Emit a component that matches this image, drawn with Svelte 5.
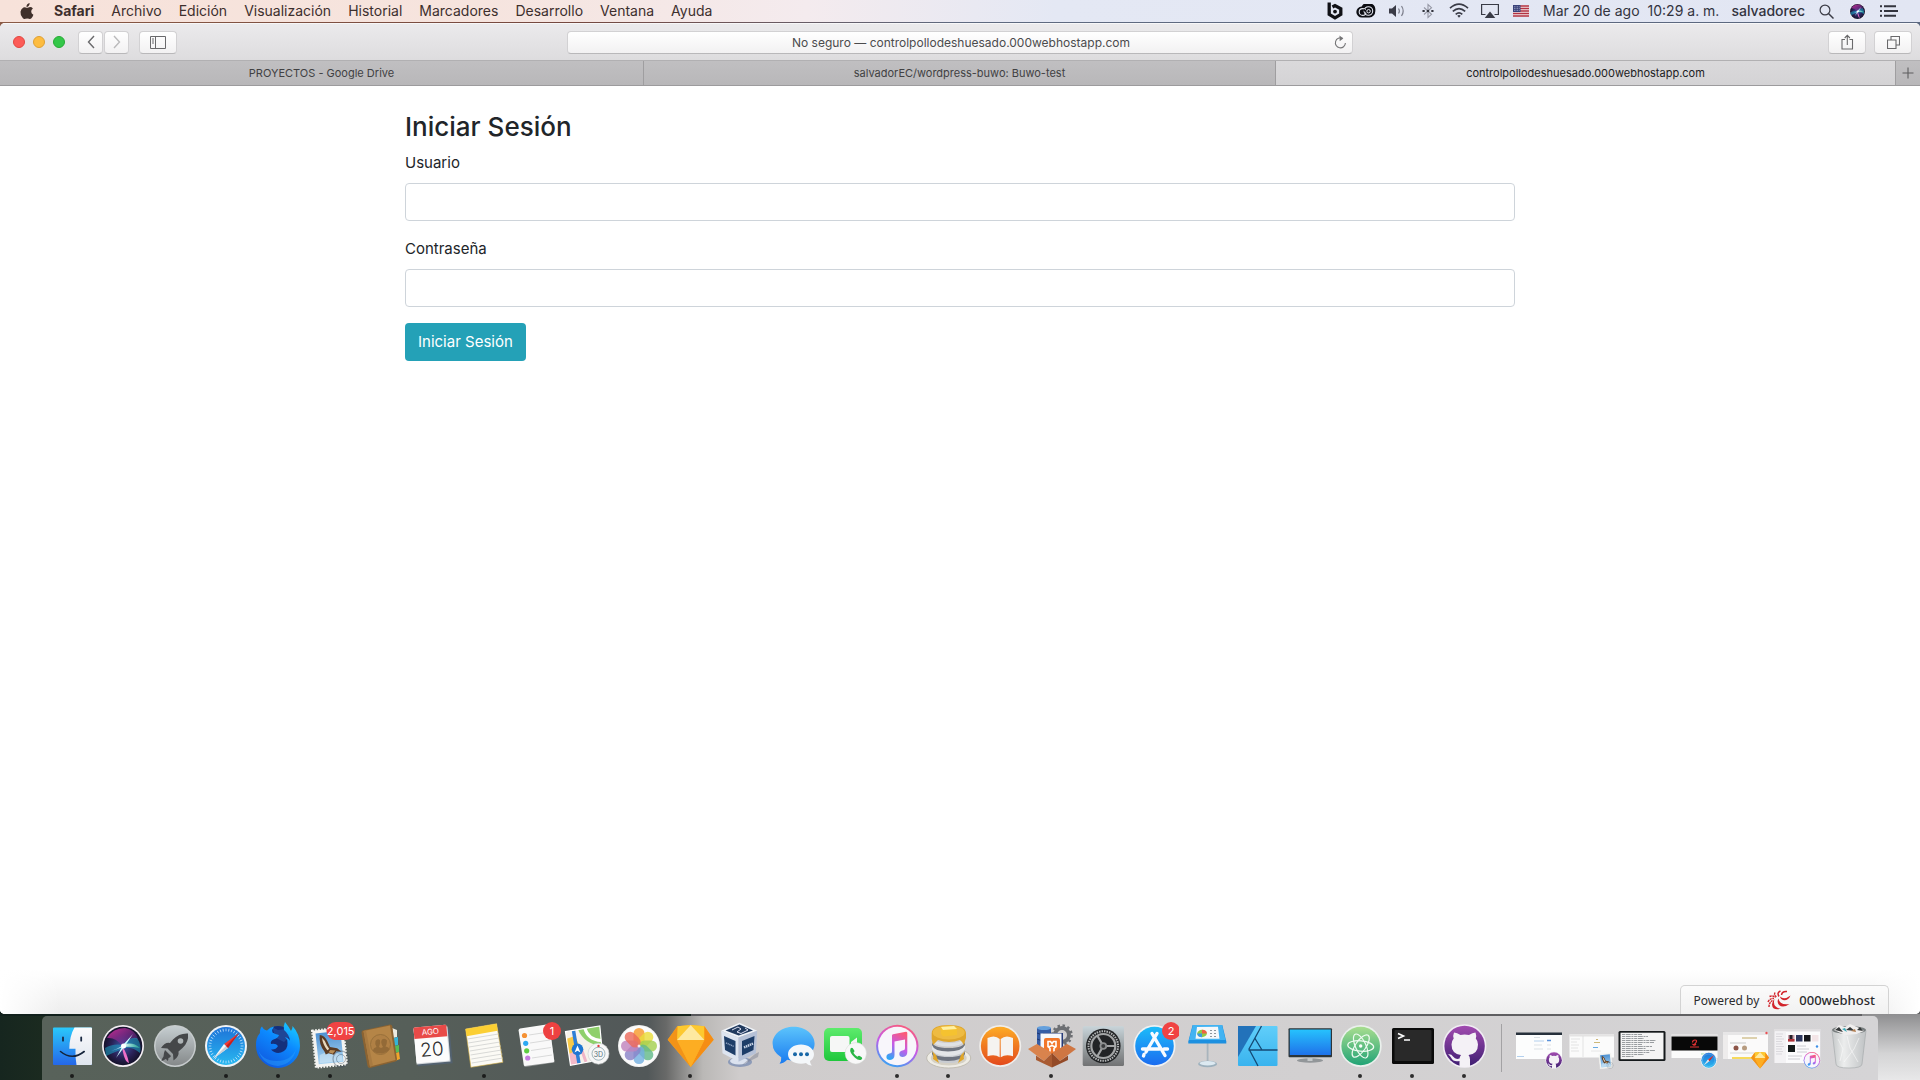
<script>
  let user = $state('');
  let password = $state('');
  const menus = ['Archivo', 'Edición', 'Visualización', 'Historial', 'Marcadores', 'Desarrollo', 'Ventana', 'Ayuda'];
  const ticks = Array.from({ length: 36 }, (_, i) => i * 10);
  const petals = [
    ['#f79a2d', 0], ['#e9dd3c', 45], ['#a5cf4f', 90], ['#63b98a', 135],
    ['#74b0e0', 180], ['#8a84c8', 225], ['#c084bd', 270], ['#ec6a5c', 315]
  ];
</script>

{#snippet finder()}
  <defs>
    <linearGradient id="fnA" x1="0" y1="0" x2="0" y2="1"><stop offset="0" stop-color="#2ac8fb" /><stop offset="1" stop-color="#2567e8" /></linearGradient>
    <linearGradient id="fnB" x1="0" y1="0" x2="0" y2="1"><stop offset="0" stop-color="#fafafc" /><stop offset="1" stop-color="#dfe5ee" /></linearGradient>
  </defs>
  <rect x="6" y="6.5" width="39" height="37.5" rx="1" fill="url(#fnA)" />
  <path d="M27.5 6.5H44a1 1 0 0 1 1 1V43a1 1 0 0 1-1 1H29.5q-1.400-7-1-16.300H22.300Q22.500 15 27.500 6.500Z" fill="url(#fnB)" />
  <path d="M16 16.300v3.400M34.200 16.300v3.400" stroke="#1c2b44" stroke-width="1.800" stroke-linecap="round" />
  <path d="M13.500 30.500q11.800 9.500 23.700 0" fill="none" stroke="#14233a" stroke-width="1.600" stroke-linecap="round" />
{/snippet}

{#snippet siri()}
  <defs>
    <radialGradient id="srA"><stop offset="0" stop-color="#3b57a8" /><stop offset=".6" stop-color="#2a2258" /><stop offset="1" stop-color="#15122b" /></radialGradient>
    <linearGradient id="srB" x1="0" y1="0" x2="1" y2="1"><stop offset="0" stop-color="#d6309b" /><stop offset="1" stop-color="#4b2585" stop-opacity=".3" /></linearGradient>
    <linearGradient id="srC" x1="0" y1="0" x2="1" y2="0"><stop offset="0" stop-color="#17a5e8" stop-opacity=".4" /><stop offset=".5" stop-color="#fff" /><stop offset="1" stop-color="#2fd8a0" stop-opacity=".5" /></linearGradient>
  </defs>
  <circle cx="25" cy="25" r="21" fill="#f3eef3" />
  <circle cx="25" cy="25" r="19.300" fill="url(#srA)" />
  <path d="M9 17Q15 7 27 7q11 2 13 12-7-5-16 6Q18 16 9 17Z" fill="url(#srB)" />
  <path d="M7 27q8-5 18-3 7-9 14-7 5 7 3 15-7-6-15-5-10 4-19 8Z" fill="#1ca6c8" opacity=".55" />
  <path d="M8 31q11-2 17-7 9-4 17 3-10-2-17-1-7 3-17 5Z" fill="url(#srC)" />
  <path d="M24 25q5 7 7 17-5-1-7-17Z" fill="#f070c9" />
  <path d="m25 24 10-11-8 12-9 12Z" fill="#cffcff" />
  <circle cx="25.500" cy="25" r="2.500" fill="#fff" />
{/snippet}

{#snippet launchpad()}
  <defs><linearGradient id="lpA" x1="0" y1="0" x2="0" y2="1"><stop offset="0" stop-color="#c5cdd0" /><stop offset="1" stop-color="#85898a" /></linearGradient></defs>
  <circle cx="25" cy="25" r="21" fill="#c7cccd" /><circle cx="25" cy="25" r="19.500" fill="url(#lpA)" />
  <path d="M38 12.500q-9-.5-15 6l-3 3.500q-5-1-9 5l6.500.5 5.500 5.500.5 6.500q6-4 5-9l4-3.500q6.500-6 5.500-14.500Z" fill="#454749" />
  <path d="m15 29 6 6q-1 2-2.500 2 0 2-1 3-1-2-2-2-1.500 1.500-4 2 .5-3 2-4.500 0-3 1.500-6.500Z" fill="#454749" />
  <circle cx="30.500" cy="20" r="2.800" fill="#aeb4b6" />
{/snippet}

{#snippet safari()}
  <defs><linearGradient id="sfA" x1="0" y1="0" x2="0" y2="1"><stop offset="0" stop-color="#1e73d8" /><stop offset="1" stop-color="#28b8f0" /></linearGradient></defs>
  <circle cx="25" cy="25" r="21" fill="#f1f3f5" /><circle cx="25" cy="25" r="19" fill="url(#sfA)" />
  {#each ticks as t (t)}<path d="M25 7.500v2.800" stroke="#d5edff" stroke-width=".7" transform="rotate({t} 25 25)" />{/each}
  <path d="m38 12-11 15-4-4Z" fill="#ef3b36" /><path d="m12 38 11-15 4 4Z" fill="#f7f7f7" /><path d="m12 38 13-13 2 2Z" fill="#c9ced6" /><path d="M38 12 25 25l2 2Z" fill="#c4201f" />
{/snippet}

{#snippet firefox()}
  <defs>
    <linearGradient id="ffA" x1=".9" y1="0" x2=".3" y2="1"><stop offset="0" stop-color="#1bd2ff" /><stop offset=".45" stop-color="#0c8aff" /><stop offset="1" stop-color="#1059e0" /></linearGradient>
  </defs>
  <circle cx="25" cy="20" r="15" fill="#142f7c" />
  <path d="m19 6 6 3 8-1 4 7-6 6-8-4Z" fill="#24509f" opacity=".7" />
  <path d="M9 5.500Q10.500 9 14 9.500 17 6 21 5.500 18.500 8.500 19.500 11.500 22 13 26 14 25 17 20.500 18.500 17 20 18 23 23 22 25 25 23 29 18 28.500 22 33 28 31.500 35 29 34.500 22 34.500 18 32 16 36 17 37 20 36 13 31 9 30 5 32 1 36 6 38 10 40 7 39.500 5 47 13 47 25A22 22 0 0 1 3 25Q2.500 17 7 12 6.500 8 9 5.500Z" fill="url(#ffA)" />
  <path d="M5 28q4 12 19 12 14 0 19-12-3 15-18 17Q9 44 5 28Z" fill="#2ea7ff" opacity=".4" />
{/snippet}

{#snippet mailStamp()}
  <defs><linearGradient id="mlA" x1="0" y1="0" x2="0" y2="1"><stop offset="0" stop-color="#4e91d2" /><stop offset="1" stop-color="#a9d4f2" /></linearGradient></defs>
  <g transform="rotate(-6 25 26)">
    <rect x="9" y="8" width="31" height="37" fill="#f4f4f1" />
    <rect x="9" y="8" width="31" height="37" fill="none" stroke="#f4f4f1" stroke-width="2.400" stroke-dasharray="1.600 1.400" />
    <rect x="12" y="11" width="25" height="31" fill="url(#mlA)" />
    <path d="M14 33q10-5 22 2v6H13Z" fill="#dcecf6" opacity=".5" />
    <path d="M16 13q5 1 7 7l2 6 7 2 4 4-5-1-3 3-5-2-3 1-1-3q-5-8-3-17Z" fill="#5a3b24" />
    <path d="M18 16q3 3 4 8l2 4-2 1q-4-6-4-13Z" fill="#e8d9be" /><path d="m25 29 5 1-3 3-4-2Z" fill="#b98e58" />
  </g>
  <circle cx="36" cy="38" r="8" fill="none" stroke="#3c4c5c" stroke-opacity=".4" stroke-width="1.300" />
  <circle cx="36" cy="38" r="4.500" fill="none" stroke="#3c4c5c" stroke-opacity=".4" stroke-width="1" />
{/snippet}

{#snippet mail()}
  {@render mailStamp()}
  <rect x="21.500" y="1" width="28.500" height="18" rx="9" fill="#f04343" />
  <text x="35.700" y="14" class="badge">2,015</text>
{/snippet}

{#snippet contacts()}
  <path d="m36 7 5 2v7l-4 1Z" fill="#eceae0" /><path d="m38 17 4-1v8l-4 1Z" fill="#36b4d8" /><path d="m39 25 4-1v7l-4 1Z" fill="#57bd55" /><path d="m40 32 3-1 1 7-5 2Z" fill="#f0a52c" />
  <path d="M6.500 9.500 34 3.500q2 0 2.300 2L41 38q0 2-1.500 2.500L14 47q-2 0-2.500-2L5.500 12q0-2 1-2.500Z" fill="#8b6332" />
  <path d="M7.500 10 34 4.500 39.500 39 14 45.500Z" fill="#b58547" />
  <path d="m7.500 10 2.500-.5L17 45l-3 .5Z" fill="#a87a41" />
  <circle cx="24.500" cy="23.500" r="10" fill="#b08045" stroke="#98703a" stroke-width="1" />
  <path d="M17 30q0-3 3.500-4-2-3-1-6 2-3 4.500-1 1 3-1 7l2 1 2-1q-3-5-1-7.500 3-2 5 1 0 4-1.500 6 3.500.5 4 3-4 4-8.500 4-5 0-8-2.500Z" fill="#936a37" />
{/snippet}

{#snippet calendar()}
  <g transform="rotate(-5 24 24)">
    <path d="M8 9h35v35H8Z" fill="#536270" /><path d="M7 7h34v35H7Z" fill="#d4d8dc" />
    <rect x="7" y="5" width="33" height="36" rx="1.500" fill="#fcfcfc" />
    <path d="M8 5h31a1 1 0 0 1 1 1v10.500H7V6a1 1 0 0 1 1-1Z" fill="#e84a48" />
    <text x="23.500" y="13.500" class="month">AGO</text>
    <text x="23.500" y="35" class="day">20</text>
  </g>
{/snippet}

{#snippet notes()}
  <path d="m6.600 8 31-5.300 6.300 38.600-32 5Z" fill="#fbfaf5" stroke="#d9b243" stroke-width=".6" />
  <path d="m6.600 8 31-5.300 1 7-31 5.500Z" fill="#fbcf33" />
  <path d="m8.500 18 31-5m-30.300 9 31-5m-30.200 9 31-5m-30.200 9 31-5m-30.200 9 31-5m-30.200 9 31-5m-30.600 9 31-5" stroke="#c9cac8" stroke-width=".7" />
{/snippet}

{#snippet reminders()}
  <path d="m9.500 8.500 29-4 5 37-29 4.500q-1 0-1.500-1Z" fill="#8e9292" />
  <path d="M9 7.500 37 3.300q1.300 0 1.500 1.300L43.300 40q0 1-1 1.300L14 45q-1 0-1.200-1L7.600 9.500q0-1.500 1.400-2Z" fill="#f9f9f9" />
  <path d="m18 14 20-3m-19 11 20-3m-19 10.500 20-3M21 37l20-3" stroke="#d0d2d2" stroke-width=".8" />
  <circle cx="13.500" cy="14.500" r="2.600" fill="#f59134" /><circle cx="14.700" cy="22.300" r="2.600" fill="#2da9f3" /><circle cx="15.700" cy="29.800" r="2.600" fill="#5ecc43" /><circle cx="16.700" cy="37" r="2.600" fill="#c47ae0" />
  <circle cx="41" cy="10" r="9" fill="#ee4141" /><text x="41" y="14" class="badge">1</text>
{/snippet}

{#snippet maps()}
  <path d="m3.500 10.700 34.300-5.700L41 38.300 8.500 44.300Z" fill="#f6f2ea" />
  <path d="m16 8.600 21.800-3.600 2 20Q22 23 16 8.600Z" fill="#8fd06c" /><path d="M23 7.500q3 11 16 12" fill="none" stroke="#fff" stroke-width="3" />
  <path d="m4 18 9-3 4 9-9 12Z" fill="#f7c948" /><path d="m7 33 6-3 4 12.500-8.500 1.800Z" fill="#f3b9c9" /><path d="m19 27 5 14" stroke="#f0b5c7" stroke-width="3" />
  <path d="m11.500 9.500 5.500 33" stroke="#2d7fd6" stroke-width="3.500" />
  <path d="m3.500 10.700 34.300-5.700L41 38.300 8.500 44.300Z" fill="none" stroke="#fff" stroke-width="1.200" />
  <circle cx="15.500" cy="28.300" r="5.800" fill="#1f76d2" /><path d="m15.500 24.500 3 7-3-1.800-3 1.800Z" fill="#fff" />
  <circle cx="36.500" cy="32.700" r="10.500" fill="#f7f7f7" stroke="#c8cccd" stroke-width=".6" /><circle cx="36.500" cy="32.700" r="6.500" fill="none" stroke="#8ba5ab" stroke-width=".8" />
  <text x="36.500" y="35.500" class="three">3D</text><circle cx="36.500" cy="25" r="1.200" fill="#e2373a" />
{/snippet}

{#snippet photos()}
  <circle cx="25" cy="25" r="21" fill="#f1f1f1" /><circle cx="25" cy="25" r="20" fill="#fbfbfb" />
  {#each petals as [color, angle] (angle)}<rect x="19.500" y="7" width="11" height="18" rx="5.500" fill={color} opacity=".82" transform="rotate({angle} 25 25)" />{/each}
  <circle cx="25" cy="25" r="1.500" fill="#fff" opacity=".8" />
{/snippet}

{#snippet sketch()}
  <path d="M2.700 18.700 12.400 5.300 25.700 4l13.700 1.300 9.300 13.400L25.700 46Z" fill="#fbab1c" />
  <path d="M12.400 5.300 25.700 4 12 19.300Z" fill="#fdc92f" /><path d="m39.400 5.300-13.700-1.300 13.700 15.300Z" fill="#fdc92f" />
  <path d="M25.700 4 12 19h27.400Z" fill="#fee9a0" /><path d="m2.700 18.700 9.700-13.400-.4 13.700 13.700 27Z" fill="#f29318" /><path d="m48.700 18.700-9.300-13.400v13.700L25.700 46Z" fill="#f58d14" /><path d="M12 19h27.400L25.700 46Z" fill="#fdad22" />
{/snippet}

{#snippet vbox()}
  <ellipse cx="23" cy="41" rx="12" ry="5" fill="#8d9bb8" /><ellipse cx="22" cy="40" rx="9" ry="3.500" fill="#dbe2ef" />
  <path d="m38 33 4-2-1 5-16 8Z" fill="#7f8494" opacity=".5" />
  <path d="M22.500 1.700 4.200 9.700 21.500 16.500l18.700-6.800Z" fill="#f0f3f8" /><path d="m4.200 9.700 17.300 6.800v24.200l-16-8.400Z" fill="#dde4f0" /><path d="m40.200 9.700-18.700 6.800v24.200l17.400-8.400Z" fill="#b6c1d7" />
  <path d="M22.500 3.500 8.500 9.600l13.200 5 14.300-5Z" fill="#213a5e" /><path d="m15 9 6-3 3 2-4 3 4 1.500 7-3.500-3-2" fill="none" stroke="#eef" stroke-width=".9" />
  <path d="m7 15 11.500 5v14.500L8 29Z" fill="#1d3d68" /><path d="m37.500 15-12.500 5v14.500L36.500 29Z" fill="#1d3d68" />
  <path d="m9 22 8 3.500" stroke="#8ea2c2" stroke-width="1.400" stroke-dasharray="1.200 .6" /><path d="m27 26.500 9-4" stroke="#cbd6e8" stroke-width="2.400" stroke-dasharray="1.500 .6" />
{/snippet}

{#snippet messages()}
  <defs><linearGradient id="msA" x1="0" y1="0" x2="0" y2="1"><stop offset="0" stop-color="#5cc4fc" /><stop offset="1" stop-color="#1a7bf0" /></linearGradient></defs>
  <path d="M25.600 5.700C37 5.700 46.600 13 46.600 22.500S37 39.500 25.600 39.500q-4 0-6.500-.8-3 3.500-7.500 4 2-2.500 1.600-6.500-8.600-5-8.600-13.700C4.600 13 14 5.700 25.600 5.700Z" fill="url(#msA)" />
  <path d="M33 23.500c7 0 13 4 13 9.800 0 3-1.500 5.200-4 6.800.2 2 1 3.500 2 4.500-3-.2-5-1.300-6-2.500q-2 .7-5 .7c-7 0-13-3.800-13-9.500s6-9.800 13-9.800Z" fill="#f4f7fa" />
  <circle cx="27" cy="33.300" r="2" fill="#1867a7" /><circle cx="33" cy="33.300" r="2" fill="#1867a7" /><circle cx="39" cy="33.300" r="2" fill="#1867a7" />
{/snippet}

{#snippet facetime()}
  <defs><linearGradient id="ftA" x1="0" y1="0" x2="0" y2="1"><stop offset="0" stop-color="#5deb6c" /><stop offset="1" stop-color="#1fc73c" /></linearGradient></defs>
  <rect x="4" y="7" width="38" height="33" rx="5" fill="url(#ftA)" /><rect x="10" y="15" width="19.500" height="16" rx="2" fill="#f6f7f6" /><path d="m31 21 6-4.500v14L31 26Z" fill="#f6f7f6" />
  <circle cx="35.800" cy="32.300" r="10.700" fill="#f8f8f8" stroke="#d3d6d3" stroke-width=".5" />
  <path d="M30.500 27.500q1.500-1.500 2.300-.3l1.600 2.500q.3 1-1 2 1.500 2.500 4 4 1.300-1.500 2.300-.8l2 1.400q1.200.8-.2 2.200-2.500 1.700-6.500-1.700-6-5.500-4.500-9.300Z" fill="#29b645" />
{/snippet}

{#snippet itunes()}
  <defs>
    <linearGradient id="itA" x1=".7" y1="0" x2=".3" y2="1"><stop offset="0" stop-color="#fb5b78" /><stop offset=".5" stop-color="#c65be8" /><stop offset="1" stop-color="#32a5f4" /></linearGradient>
  </defs>
  <circle cx="25.300" cy="25" r="21.200" fill="url(#itA)" /><circle cx="25.300" cy="25" r="19.200" fill="#f8f6fb" />
  <path fill-rule="evenodd" d="M20 14.500q0-1 1-1.300l13-2.400q1.300 0 1.300 1.200v19q0 4.500-4.500 5-3.500 0-3.500-3 0-3.300 4-3.800 1.700-.2 1.700-2v-8.700l-10.500 2V34q0 4.500-4.500 5-3.600 0-3.600-3 0-3.300 4-3.800 1.600-.2 1.600-2Z" fill="url(#itA)" />
{/snippet}

{#snippet sequel()}
  <ellipse cx="25.700" cy="37" rx="22" ry="10" fill="#eeece5" stroke="#b9b5a9" stroke-width=".8" /><ellipse cx="25.700" cy="37" rx="18" ry="7.500" fill="#d5d1c6" />
  <path d="M9 34q0 8 16.700 8T42 34v-5H9Z" fill="#c9ccd1" /><path d="M9 29q0 7 16.500 7T42 29v4q-3 7-17 7T9 33Z" fill="#6e7480" />
  <path d="M9 22q0 7 16.500 7T42 22v6q-3 7-17 7T9 28Z" fill="#e3e5e8" /><path d="M9 20q0 7 16.500 7T42 20v4q-3 6.500-17 6.500T9 24Z" fill="#707580" />
  <path d="M9 14q0 8 16.500 8T42 14v5q-3 6.500-17 6.500T9 19Z" fill="#dfe1e4" />
  <path d="M8.700 12Q9 4 25.700 4T43 12v5l-1 3-1 4-2-3-2-2q-11 4-22 0l-3 3-2 2-1.300-6Z" fill="#dfa62c" />
  <path d="M9 30q2 3 1 8l6 4-3-8Zm33 0q-2 3-1 8l-6 4 3-8Z" fill="#e0a62a" />
  <ellipse cx="25.700" cy="11.500" rx="16" ry="7" fill="#eebb42" />
  <path d="m18 6 13-1 3 3v6l-14 1.500-2-3Z" fill="#f5c230" /><path d="m18 6 13-1 3 3-14 1Z" fill="#fff0a2" />
{/snippet}

{#snippet ibooks()}
  <defs><linearGradient id="ibA" x1="0" y1="0" x2="0" y2="1"><stop offset="0" stop-color="#fdab25" /><stop offset="1" stop-color="#e3491c" /></linearGradient></defs>
  <circle cx="25.200" cy="25" r="21" fill="#efeeec" /><circle cx="25.200" cy="25" r="19.300" fill="url(#ibA)" />
  <path d="M12.500 17q7.500-3.500 12.200 1v18.200q-5-3.500-12.200-1Zm25.500 0q-7.500-3.500-12.300 1v18.200q5-3.500 12.300-1Z" fill="#f5f3f0" />
{/snippet}

{#snippet xampp()}
  <circle cx="36" cy="14" r="7" fill="none" stroke="#6d6f73" stroke-width="4" /><circle cx="36" cy="14" r="9.500" fill="none" stroke="#6d6f73" stroke-width="2.500" stroke-dasharray="2.400 2.600" />
  <path d="M11 7v20h14V7Z" fill="#355ca5" /><ellipse cx="18" cy="7" rx="7" ry="2" fill="#64a0dd" /><path d="M11 12q7 3.500 14 0m-14 6q7 3.500 14 0" stroke="#1c3670" fill="none" />
  <path d="M17 12h20v20H17Z" fill="#273b78" /><rect x="14.500" y="12.500" width="21" height="22" fill="#f6f7fb" /><rect x="18" y="17" width="16" height="16" rx="2" fill="#f2762a" />
  <path d="M22 20.500h2.500l1.500 2 1.500-2H30v5h-2l-2-1-2 1h-2Zm0 5 2 2v3m6-5-2 2v3" fill="none" stroke="#fff" stroke-width="1.600" />
  <path d="m2 28 9-5 15 9-8 8Z" fill="#d9834d" /><path d="m50 28-9-5-15 9 8 8Z" fill="#cf7642" /><path d="M10 34.500V39l16 7.500V32l-8 8Z" fill="#a95b32" /><path d="M42 34.500V39l-16 7.500V32l8 8Z" fill="#944a27" />
{/snippet}

{#snippet prefs()}
  <defs><linearGradient id="spA" x1="0" y1="0" x2="0" y2="1"><stop offset="0" stop-color="#c8d4d9" /><stop offset="1" stop-color="#717273" /></linearGradient></defs>
  <rect x="4.700" y="5.300" width="41.300" height="39.700" rx="1.500" fill="url(#spA)" /><circle cx="25.300" cy="25" r="17.300" fill="#222426" />
  <circle cx="25.300" cy="25" r="14.800" fill="none" stroke="#b3b5b6" stroke-width="2" stroke-dasharray="1.500 1" /><circle cx="25.300" cy="25" r="12" fill="none" stroke="#a3a5a6" stroke-width="2.200" />
  <path d="M25.300 25H37M25.300 25 19.500 15m5.800 10L19.500 35" stroke="#a3a5a6" stroke-width="2.200" /><circle cx="25.300" cy="25" r="3.800" fill="#8e9091" /><circle cx="25.300" cy="25" r="2" fill="#3a3c3e" />
{/snippet}

{#snippet appstore()}
  <defs><linearGradient id="asA" x1="0" y1="0" x2="0" y2="1"><stop offset="0" stop-color="#1cbcf9" /><stop offset="1" stop-color="#1b6cf0" /></linearGradient></defs>
  <circle cx="25.500" cy="25" r="21" fill="#eff1f3" /><circle cx="25.500" cy="25" r="19.300" fill="url(#asA)" />
  <path d="m28 12.500-11 18.500m6-18.500 13 22m-22.500-6.500h17m4.500 0h3.500M15 33.500 14.500 35" fill="none" stroke="#f7fbff" stroke-width="3.400" stroke-linecap="round" />
  <circle cx="42" cy="10" r="9" fill="#f04343" /><text x="42" y="14" class="badge">2</text>
{/snippet}

{#snippet keynote()}
  <path d="M26.600 22v20" stroke="#a9b4bd" stroke-width="1.800" /><ellipse cx="26.600" cy="43" rx="9.500" ry="3.200" fill="#9cb0bd" /><ellipse cx="26.600" cy="42.300" rx="8" ry="2.200" fill="#dce9f1" />
  <path d="M11.600 4h29.700l4 16.500v2H7.300v-2Z" fill="#1d90e0" /><path d="M12 4h29l3.500 15H8Z" fill="#42b3f2" />
  <path d="m16 6 21-.2 1.500 12H14.500Z" fill="#f7f8f9" /><ellipse cx="21" cy="12.500" rx="4.800" ry="3.700" fill="#8fca47" /><path d="M21 12.500V8.800q5 0 4.800 3.700Z" fill="#ef6142" /><path d="M21 12.500h-4.800q0 3.700 4.800 3.700Z" fill="#3c9ae2" /><path d="M29 9.500h2m2 0h2m-6 3h2m2 0h2m-6 3h2m2 0h2" stroke="#8e979e" />
{/snippet}

{#snippet affinity()}
  <defs><linearGradient id="afA" x1="0" y1="0" x2="0" y2="1"><stop offset="0" stop-color="#60cefa" /><stop offset="1" stop-color="#39b3ee" /></linearGradient></defs>
  <rect x="6" y="5" width="39.500" height="40" rx="1" fill="url(#afA)" /><path d="M6 5h18L6 36Z" fill="#2272ba" /><path d="M29.500 5 17 28l9 17M16.500 29h29M23 17.500 30 29" fill="none" stroke="#144a75" stroke-width="1.300" />
{/snippet}

{#snippet monitor()}
  <defs><linearGradient id="mnA" x1="0" y1="0" x2="0" y2="1"><stop offset="0" stop-color="#26c2fd" /><stop offset="1" stop-color="#1f72ea" /></linearGradient></defs>
  <ellipse cx="26" cy="39.500" rx="13" ry="2.200" fill="#929699" /><path d="M23.500 35h5v5h-5Z" fill="#c4c8ca" /><rect x="4.500" y="7.300" width="43.500" height="29" rx="1" fill="#2c3439" /><rect x="5.800" y="8.500" width="41" height="25.500" fill="url(#mnA)" />
{/snippet}

{#snippet atom()}
  <defs><linearGradient id="atA" x1="0" y1="0" x2="0" y2="1"><stop offset="0" stop-color="#a8dd8f" /><stop offset="1" stop-color="#21a376" /></linearGradient></defs>
  <circle cx="25.700" cy="25" r="21" fill="#eaf0ec" /><circle cx="25.700" cy="25" r="19.300" fill="url(#atA)" />
  <g fill="none" stroke="#effbf2" stroke-width="1.200"><ellipse cx="25.700" cy="25" rx="13" ry="5.200" transform="rotate(5 25.700 25)" /><ellipse cx="25.700" cy="25" rx="13" ry="5.200" transform="rotate(65 25.700 25)" /><ellipse cx="25.700" cy="25" rx="13" ry="5.200" transform="rotate(-55 25.700 25)" /></g><circle cx="25.700" cy="25" r="1.700" fill="#fff" />
{/snippet}

{#snippet terminal()}
  <rect x="5" y="7" width="42" height="36" rx="1.500" fill="#0b0b0b" /><rect x="7.500" y="9" width="37" height="31" rx="1" fill="#292929" /><path d="m11 12.500 5.500 2.500-5.500 2.500" fill="none" stroke="#fff" stroke-width="1.600" /><path d="M17 19h6" stroke="#fff" stroke-width="1.500" />
{/snippet}

{#snippet github()}
  <defs><linearGradient id="ghA" x1="0" y1="0" x2="0" y2="1"><stop offset="0" stop-color="#a14bb0" /><stop offset="1" stop-color="#3f1e72" /></linearGradient></defs>
  <circle cx="25.600" cy="25" r="21.800" fill="#f1edf4" /><circle cx="25.600" cy="25" r="20.200" fill="url(#ghA)" />
  <path d="M20.500 45.500V40q-6 1.500-8.500-3.500-1-2-3-3 3-1 5 2 2.500 3.500 6.500 2 .2-2 1.500-3.500-9.500-1-9.500-10.500 0-3.500 2.200-6-1-3 .3-6 3 0 6.500 2.500 4-1 8.500 0 3.500-2.500 6.500-2.500 1.200 3 .3 6 2.200 2.500 2.200 6 0 9.500-9.500 10.500 1.500 1.500 1.500 4.500v7Q25 46.500 20.500 45.500Z" fill="#f4f1f6" />
{/snippet}

{#snippet mini(icon)}
  <g transform="translate(30 29.500) scale(.39)">{@render icon()}</g>
{/snippet}

{#snippet thumbGithub()}
  <rect x="2" y="12" width="46" height="26" fill="#fcfdfd" /><rect x="2" y="11.500" width="46" height="2.500" fill="#26303b" /><path d="M20 16.500h6m-6 7.500h8m-8 4h9" stroke="#dbe1e5" /><path d="M33 19.500h4" stroke="#5b93db" stroke-width="1.500" /><path d="M20 20h10M3 35.500h7" stroke="#b3d0ee" /><path d="M33 24h4m-4 4h4" stroke="#dfe3e6" />
  {@render mini(github)}
{/snippet}
{#snippet thumbMail()}
  <rect x="3.500" y="13.500" width="44.500" height="23" fill="#fbfbfb" /><path d="M3.500 13.500H48v2H3.500Z" fill="#e4e3e3" /><path d="M5 18h9m-9 3h6m-6 3h8m-8 3h7m-7 3h8" stroke="#e3e3e3" /><path d="M17 15v21" stroke="#d5d5d5" stroke-width=".6" /><path d="M30 18.500h2m-4 3h6" stroke="#cdb878" /><path d="M27 26.500h5" stroke="#6aabe2" /><path d="M25 30h10" stroke="#e6e6e6" />
  {@render mini(mailStamp)}
{/snippet}
{#snippet thumbTerminal()}
  <rect x="1.500" y="10" width="47" height="30" rx="1.500" fill="#15191b" /><rect x="3.500" y="11.700" width="43" height="26.500" fill="#f4f4f4" />
  <path d="M5 13.500h20M5 15.500h26M5 17.500h22M5 19.500h34M5 21.500h32M5 23.500h20M5 25.500h30M5 27.500h24M5 29.500h33M5 31.500h28M5 33.500h22M5 35.500h12" stroke="#81868a" stroke-width=".8" stroke-dasharray="3 .7 5 .7 2 .7" />
{/snippet}
{#snippet thumbSafari()}
  <rect x="2.500" y="13.500" width="46" height="23.500" fill="#fbfbfb" /><rect x="2.500" y="13.500" width="46" height="2" fill="#deddde" /><rect x="2.500" y="15.500" width="46" height="14" fill="#080808" /><path d="M23.500 21.500q0-2.500 2.500-2.500t1 2.500-3 2q1 1.500 3-.5M21 26h9" stroke="#db3031" stroke-width="1.200" fill="none" /><path d="M32 33h4" stroke="#94dba9" />
  {@render mini(safari)}
{/snippet}
{#snippet thumbSketch()}
  <rect x="3" y="11.500" width="45" height="26.500" fill="#fbfafa" /><rect x="3" y="11.500" width="45" height="2.500" fill="#e7e6e7" /><path d="M3 14h5v24H3Z" fill="#eeecec" /><path d="M22 17h15" stroke="#cdbb85" stroke-width="1.300" /><path d="M10 22h16" stroke="#bbb" stroke-width=".8" /><circle cx="16" cy="27" r="2.500" fill="#8d5548" /><circle cx="24.500" cy="27" r="2.500" fill="#b79c80" /><path d="M10 32h24" stroke="#c9c9c9" stroke-width=".7" /><path d="M12 37h20" stroke="#f6da5d" stroke-width="2" /><circle cx="46.500" cy="12" r="1.200" fill="#ea4f53" />
  {@render mini(sketch)}
{/snippet}
{#snippet thumbItunes()}
  <rect x="2.700" y="8" width="45.500" height="34" fill="#fbfbfc" /><rect x="2.700" y="8" width="45.500" height="2.500" fill="#dfdddf" /><path d="M2.700 10.500H14V42H2.700Z" fill="#f3f2f4" /><path d="M4 13h7m-7 2.500h6m-6 2.500h8m-8 2.500h6m-6 2.500h7m-7 2.500h8m-8 2.500h6m-6 2.500h7m-7 2.500h6" stroke="#d0ced2" stroke-width=".7" />
  <rect x="16" y="14" width="6.500" height="6.500" fill="#c9a3ad" /><path d="M17.500 14h3v5h-3Z" fill="#27202a" /><path d="M16 18h6.500v2.500H16Z" fill="#b03239" /><rect x="24" y="14" width="6.500" height="6.500" fill="#2d375e" /><rect x="32" y="14" width="6.500" height="6.500" fill="#14161a" /><rect x="40" y="14" width="6.500" height="6.500" fill="#f3e5e7" /><rect x="16" y="24" width="7" height="7" fill="#151c1b" /><path d="M25 25h9m-9 3h12m-12 3h10M16 35h14M16 38h12" stroke="#c3c4c9" stroke-width=".8" /><circle cx="45" cy="25.500" r="1.200" fill="#3d8fe8" />
  {@render mini(itunes)}
{/snippet}
{#snippet trash()}
  <defs><linearGradient id="trA"><stop offset="0" stop-color="#c5c8c9" /><stop offset=".35" stop-color="#eceded" /><stop offset="1" stop-color="#bfc2c4" /></linearGradient></defs>
  <path d="M9 9.500 13 43q0 4 13 4t13-4L43 9.500Z" fill="url(#trA)" /><ellipse cx="26" cy="9" rx="17" ry="4" fill="#777d7e" /><path d="m11 9 5-5 6 2 5-3 7 3 7 4-7 3-12 1Z" fill="#f0eeee" /><path d="m12 9 4-3 4 5Zm11 0 4-3 5 4Zm11 0 3-3 3 4Z" fill="#35393a" /><path d="m19 8 3-1 2 4Z" fill="#3aa9b7" /><path d="m28 10 4-2 1 3Z" fill="#b07d50" />
  <path d="m15 18 5 10-3 12M24 15l3 12 8 14M36 17l-5 11-10 13" fill="none" stroke="#fff" stroke-opacity=".5" /><path d="M9 9.500 13 43q0 4 13 4t13-4L43 9.500" fill="none" stroke="#a1a6a8" stroke-width=".6" />
{/snippet}

{#snippet item(icon, label, running)}
  <button class="dock-item" aria-label={label}>
    <svg viewBox="0 0 50 50" width="50" height="50">{@render icon()}</svg>
    {#if running}<span class="running"></span>{/if}
  </button>
{/snippet}

<div class="desktop">
  <header class="menubar">
    <nav aria-label="Menú">
      <button class="apple" aria-label="Apple"><svg viewBox="0 0 14 17" width="14" height="17"><path d="M9.600 0q.2 1.600-.8 2.800T6.500 4Q6.300 2.500 7.300 1.300 8.300.2 9.600 0ZM6.900 4.800q.7 0 1.500-.4 2.800-1 4.500 1.100-1.900 1.200-1.700 3.200.1 2.200 2.200 3.100-.7 2-2 3.500-1 1-2.300.5-1.900-.8-3.700 0-1.400.7-2.500-.5Q.1 12.500.5 8.700q.5-3 2.900-4.200Q4.600 4 5.800 4.500q.6.300 1.100.3Z" fill="#40302b" /></svg></button>
      <button class="app">Safari</button>
      {#each menus as m (m)}<button>{m}</button>{/each}
    </nav>
    <div class="status">
      <button class="ico" aria-label="Bitdefender"><svg viewBox="0 0 18 18" width="18" height="18"><path d="M3.200.5v11.800L9 15.800l5.800-3.400V6.800L9 3.600 6.500 5" fill="none" stroke="#101116" stroke-width="3.300" /><circle cx="9" cy="9.600" r="1.900" fill="#101116" /></svg></button>
      <button class="ico" aria-label="Creative Cloud"><svg viewBox="0 0 20 14" width="20" height="14"><path d="M6 13.500a5.500 5.500 0 0 1-.3-11 7.300 7.300 0 0 1 13.600 4.500 6.300 6.300 0 0 1-6 6.500Z" fill="#0c0d13" /><circle cx="6.600" cy="8" r="3.400" fill="none" stroke="#e5e8f2" stroke-width="1.100" /><circle cx="12.400" cy="7" r="4.300" fill="none" stroke="#e5e8f2" stroke-width="1.100" /><path d="m7.500 5.500 5.500 4" stroke="#0c0d13" stroke-width="1.800" /><circle cx="12.600" cy="7.200" r="1.700" fill="none" stroke="#e5e8f2" stroke-width="1" /></svg></button>
      <button class="ico" aria-label="Volumen"><svg viewBox="0 0 18 14" width="18" height="14"><path d="M1 4.500h3L8 1v12L4 9.500H1Z" fill="#3a3b46" /><path d="M10.500 4.500q1.800 2.500 0 5M13.500 2q3.400 5 0 10" fill="none" stroke="#7d7f8c" stroke-width="1.200" /></svg></button>
      <button class="ico" aria-label="Bluetooth"><svg viewBox="0 0 14 16" width="14" height="16"><path d="m3 4.500 7.500 6.800L7 14.500v-13l3.500 3.200L3 11.500" fill="none" stroke="#9698a5" stroke-width="1.100" /><path d="M1.500 8h2.200M5.900 8h2.200M10.300 8h2.200" stroke="#33353e" stroke-width="2" /></svg></button>
      <button class="ico" aria-label="Wi-Fi"><svg viewBox="0 0 20 16" width="20" height="16"><path d="M1 5.200q9-8 18 0M3.800 8.300q6.200-5.500 12.400 0M6.700 11.300q3.300-2.800 6.600 0" fill="none" stroke="#393b46" stroke-width="1.700" /><path d="m8.300 12.700q1.700-1.300 3.400 0L10 14.700Z" fill="#393b46" /></svg></button>
      <button class="ico" aria-label="AirPlay"><svg viewBox="0 0 18 16" width="18" height="16"><path d="M4.500 11.500H.6V1.500h16.800v10h-3.900" fill="none" stroke="#393b46" stroke-width="1.200" /><path d="m9 8.500 5.300 6.500H3.700Z" fill="#393b46" /></svg></button>
      <button class="ico" aria-label="Teclado"><svg viewBox="0 0 16 12" width="16" height="12"><rect width="16" height="12" fill="#f3e7ea" /><path d="M0 1h16M0 3.500h16M0 6h16M0 8.500h16M0 11h16" stroke="#b33342" stroke-width="1.300" /><rect width="7.500" height="7" fill="#39427a" /><path d="M1 1.800h6M1 3.600h6M1 5.400h6" stroke="#ccd0e5" stroke-width=".7" stroke-dasharray=".8 .8" /></svg></button>
      <button class="clock"><span>Mar 20 de ago</span><span>10:29 a. m.</span></button>
      <button class="account">salvadorec</button>
      <button class="ico" aria-label="Spotlight"><svg viewBox="0 0 15 15" width="15" height="15"><circle cx="6" cy="6" r="4.900" fill="none" stroke="#3b3c46" stroke-width="1.200" /><path d="m9.500 9.500 5 5" stroke="#3b3c46" stroke-width="1.500" /></svg></button>
      <button class="ico" aria-label="Siri"><svg viewBox="3 3 44 44" width="17" height="17">{@render siri()}</svg></button>
      <button class="ico" aria-label="Centro de notificaciones"><svg viewBox="0 0 18 12" width="18" height="12"><path d="M0 1.200h2m-2 4.800h2m-2 4.800h2M4 1.200h12M4 6h14M4 10.800h12" stroke="#33343e" stroke-width="1.900" /></svg></button>
    </div>
  </header>

  <section class="window" aria-label="Safari">
    <div class="toolbar">
      <div class="left">
        <div class="lights"><button class="close" aria-label="Cerrar"></button><button class="min" aria-label="Minimizar"></button><button class="max" aria-label="Ampliar"></button></div>
        <div class="pair">
          <button class="tool" aria-label="Atrás"><svg viewBox="0 0 8 14" width="8" height="14"><path d="M7 1 1.500 7 7 13" fill="none" stroke="#6a6a6c" stroke-width="1.400" /></svg></button>
          <button class="tool" aria-label="Adelante"><svg viewBox="0 0 8 14" width="8" height="14"><path d="M1 1 6.500 7 1 13" fill="none" stroke="#bababb" stroke-width="1.400" /></svg></button>
        </div>
        <button class="tool wide" aria-label="Barra lateral"><svg viewBox="0 0 16 13" width="16" height="13"><path d="M.5.500h15v12H.5ZM5.500.500v12M2 3h2M2 5h2M2 7h2" fill="none" stroke="#69696b" /></svg></button>
      </div>
      <div class="address">
        <button class="url">No seguro — controlpollodeshuesado.000webhostapp.com</button>
        <button class="reload" aria-label="Recargar"><svg viewBox="0 0 13 14" width="13" height="14"><path d="M8.500 3.300A5 5 0 1 0 11.400 8" fill="none" stroke="#757577" stroke-width="1.100" /><path d="M5.500.500 9.300 3.500 5.700 6.300Z" fill="#757577" /></svg></button>
      </div>
      <div class="right">
        <button class="tool wide" aria-label="Compartir"><svg viewBox="0 0 13 16" width="13" height="16"><path d="M4 5.500H1v9.500h10.500V5.500h-3M6.300 11V1.500M3.700 4l2.600-2.700L8.900 4" fill="none" stroke="#69696b" stroke-width="1.100" /></svg></button>
        <button class="tool wide" aria-label="Mostrar pestañas"><svg viewBox="0 0 13 13" width="13" height="13"><path d="M.5 4h8.500v8.500H.5ZM4 4V.500h8.500V9H9" fill="none" stroke="#69696b" stroke-width="1.100" /></svg></button>
      </div>
    </div>
    <div class="tabs">
      <button>PROYECTOS - Google Drive</button>
      <button>salvadorEC/wordpress-buwo: Buwo-test</button>
      <button class="active">controlpollodeshuesado.000webhostapp.com</button>
      <button class="add" aria-label="Nueva pestaña"><svg viewBox="0 0 12 12" width="12" height="12"><path d="M6 .5v11M.5 6h11" stroke="#5d5d5f" stroke-width="1.100" /></svg></button>
    </div>
    <main>
      <form onsubmit={(e) => e.preventDefault()}>
        <h1>Iniciar Sesión</h1>
        <label for="user">Usuario</label>
        <input id="user" type="text" bind:value={user} />
        <label for="password">Contraseña</label>
        <input id="password" type="password" bind:value={password} />
        <button class="submit" type="submit">Iniciar Sesión</button>
      </form>
      <a class="powered" href="#000webhost">
        <span>Powered by</span>
        <svg viewBox="0 0 24 20" width="24" height="20">
          <path d="M7.500 9Q5 17.500 14 18.800 5.500 21 5 14.500 5 11 7.500 9Zm4-.5q1 7 11 5.500-6.500 4.500-10.500 1-2.500-3-.5-6.500ZM13 6.500q4 4 10.500-1-2 5-6.500 4.800Q13.500 9.800 13 6.500Z" fill="#d2242b" />
          <path d="M13.500 1Q9.500 2.500 12 6.500M20 1.500q-5-.5-5.500 3.500" fill="none" stroke="#d2242b" stroke-width="1.500" />
          <path d="M8 2.500Q6.500 5.500 10 7M2.500 6.500q3-1.500 6 1M1 12q2-4 6-3.500M2 17q0-4.500 3.500-6.500" fill="none" stroke="#d2242b" stroke-width="1.400" stroke-dasharray="2.200 .7" />
        </svg>
        <strong>000webhost</strong>
      </a>
    </main>
  </section>

  <footer>
    <div class="dock">
      {@render item(finder, 'Finder', true)}
      {@render item(siri, 'Siri', false)}
      {@render item(launchpad, 'Launchpad', false)}
      {@render item(safari, 'Safari', true)}
      {@render item(firefox, 'Firefox', true)}
      {@render item(mail, 'Mail', true)}
      {@render item(contacts, 'Contactos', false)}
      {@render item(calendar, 'Calendario', false)}
      {@render item(notes, 'Notas', true)}
      {@render item(reminders, 'Recordatorios', false)}
      {@render item(maps, 'Mapas', false)}
      {@render item(photos, 'Fotos', false)}
      {@render item(sketch, 'Sketch', true)}
      {@render item(vbox, 'VirtualBox', false)}
      {@render item(messages, 'Mensajes', false)}
      {@render item(facetime, 'FaceTime', false)}
      {@render item(itunes, 'iTunes', true)}
      {@render item(sequel, 'Sequel Pro', true)}
      {@render item(ibooks, 'iBooks', false)}
      {@render item(xampp, 'XAMPP', true)}
      {@render item(prefs, 'Preferencias', false)}
      {@render item(appstore, 'App Store', false)}
      {@render item(keynote, 'Keynote', false)}
      {@render item(affinity, 'Affinity Designer', false)}
      {@render item(monitor, 'Escritorio remoto', false)}
      {@render item(atom, 'Atom', true)}
      {@render item(terminal, 'Terminal', true)}
      {@render item(github, 'GitHub', true)}
      <span class="separator"></span>
      {@render item(thumbGithub, 'Ventana de GitHub', false)}
      {@render item(thumbMail, 'Ventana de Mail', false)}
      {@render item(thumbTerminal, 'Ventana de Terminal', false)}
      {@render item(thumbSafari, 'Ventana de Safari', false)}
      {@render item(thumbSketch, 'Ventana de Sketch', false)}
      {@render item(thumbItunes, 'Ventana de iTunes', false)}
      {@render item(trash, 'Papelera', false)}
    </div>
  </footer>
</div>

<style>
  :global(body) { margin: 0; }
  .desktop, .desktop * { box-sizing: border-box; }
  .desktop {
    min-height: 100vh;
    display: flex;
    flex-direction: column;
    font-family: Inter, "Liberation Sans", sans-serif;
    background:
      linear-gradient(90deg, #8a5a45, #75483f 30%, #5f6a80 50%, #5c6880) top / 100% 40px no-repeat,
      linear-gradient(90deg, #11201c 36%, #626264 36%);
  }
  button { font: inherit; color: inherit; background: none; border: 0; padding: 0; margin: 0; white-space: nowrap; }
  svg { display: block; flex: none; }

  .menubar {
    height: 22px;
    display: flex;
    justify-content: space-between;
    align-items: center;
    padding: 0 16px 0 20px;
    font-size: 14px;
    line-height: 22px;
    color: #3d2f2d;
    background: linear-gradient(90deg, #f7e2da, #f6e4de 25%, #f4ebee 42%, #e4e8f4 55%, #e2e6f3);
  }
  nav { display: flex; gap: 17px; }
  .apple { display: flex; align-items: center; margin-right: 3px; }
  .app { font-weight: 700; }
  .status { display: flex; align-items: center; color: #33343f; }
  .ico { width: 31px; display: flex; justify-content: center; align-items: center; }
  .clock { display: flex; gap: 8px; margin: 0 12px 0 7px; }
  .account { margin-right: 6px; font-weight: 500; }

  .window {
    flex: 1;
    margin-top: 1px;
    display: flex;
    flex-direction: column;
    border-radius: 5px;
    overflow: hidden;
    background: #fff;
  }
  .toolbar {
    height: 38px;
    display: grid;
    grid-template-columns: 1fr 41.3% 1fr;
    align-items: center;
    padding: 0 8px;
    border-top: 1px solid #f7f7f8;
    border-bottom: 1px solid #b1b0b2;
    background: linear-gradient(#ebeaec, #dddcde);
  }
  .left, .right, .lights, .pair { display: flex; align-items: center; }
  .lights { gap: 8px; margin: 0 13px 0 5px; }
  .lights button { width: 12px; height: 12px; border-radius: 50%; border: 1px solid; }
  .lights .close { background: #fc5b57; border-color: #e2463f; }
  .lights .min { background: #fdbc40; border-color: #dfa033; }
  .lights .max { background: #34c749; border-color: #27aa35; }
  .pair { gap: 1px; margin-right: 10px; }
  .right { justify-content: flex-end; gap: 8px; }
  .tool, .address {
    height: 23px;
    display: flex;
    align-items: center;
    justify-content: center;
    border: 1px solid #d2d1d3;
    border-bottom-color: #b9b8ba;
    border-radius: 4px;
    background: linear-gradient(#fff, #f2f1f2);
  }
  .tool { width: 25px; }
  .wide { width: 38px; }
  .address { padding: 0 5px; font-size: 12px; color: #4b4b4d; }
  .url { flex: 1; padding-left: 15px; }

  .tabs {
    height: 25px;
    display: grid;
    grid-template-columns: 644fr 632fr 620fr 24px;
    border-bottom: 1px solid #9c9b9d;
    background: linear-gradient(#c0bfc1, #b8b7b9);
    font-size: 11px;
    color: #414143;
  }
  .tabs button { border-right: 1px solid #9f9ea0; display: flex; align-items: center; justify-content: center; }
  .tabs .active { background: linear-gradient(#dad9db, #d4d3d5); color: #202022; }
  .tabs .add { border-right: 0; }

  main {
    flex: 1;
    display: flex;
    flex-direction: column;
    align-items: center;
    padding-top: 24px;
    background:
      linear-gradient(90deg, #fff, transparent 60px calc(100% - 50px), #fff) bottom / 100% 44px no-repeat,
      linear-gradient(#fff, #ededed) bottom / 100% 44px no-repeat,
      #fff;
  }
  form {
    width: 100%;
    max-width: 1110px;
    display: flex;
    flex-direction: column;
    color: #212529;
    font-size: 15px;
    line-height: 24px;
  }
  h1 { margin: 0 0 7px; font-size: 26px; line-height: 34px; font-weight: 500; }
  label { margin-bottom: 8px; }
  input {
    height: 38px;
    margin: 0 0 16px;
    padding: 6px 12px;
    border: 1px solid #ced4da;
    border-radius: 4px;
    background: #fff;
    font: inherit;
    color: #495057;
  }
  .submit { align-self: flex-start; height: 38px; padding: 0 13px; border-radius: 4px; background: #24a1b7; color: #fff; }
  .powered {
    margin-top: auto;
    align-self: flex-end;
    margin-right: 31px;
    height: 29px;
    padding: 0 13px;
    display: flex;
    align-items: center;
    gap: 8px;
    border: 1px solid #d3d3d3;
    border-bottom: 0;
    border-radius: 5px 5px 0 0;
    background: linear-gradient(#fbfbfb, #f1f1f1);
    font-family: "Noto Sans", "Open Sans", sans-serif;
    font-size: 12px;
    color: #2b2b2d;
    text-decoration: none;
  }
  .powered strong { font-weight: 500; font-size: 13px; }

  footer {
    display: flex;
    justify-content: center;
    padding-top: 2px;
    background:
      linear-gradient(90deg, #11201c 36%, #56565a 36%, #626264 97%, transparent 97%) top / 100% 2px no-repeat,
      linear-gradient(90deg, #16261f, #1d2c20 3%, transparent 3%),
      linear-gradient(#8e8e90, #d4d4d5 60%, #e8e8e9);
  }
  .dock {
    width: calc(100% - 84px);
    height: 64px;
    display: flex;
    padding: 5px 4px 0;
    border-radius: 5px 5px 0 0;
    background: linear-gradient(90deg, #58625a, #565f59 20%, #525859 33%, #686968 34%, #bab8b6 36%, #cfcccc 38%, #d5d4d6);
  }
  .dock-item { flex: 1 1 0; min-width: 0; display: flex; flex-direction: column; align-items: center; gap: 3px; }
  .running { width: 4px; height: 4px; border-radius: 50%; background: #111; opacity: .85; }
  .separator { flex: 0 0 24px; height: 48px; margin-top: 3px; background: linear-gradient(#a3a2a4, #a3a2a4) center / 1px 100% no-repeat; }
  .badge { font-size: 11px; fill: #fff; text-anchor: middle; }
  .month { font-size: 8px; fill: #fff; text-anchor: middle; }
  .day { font-size: 19px; fill: #2c2c2e; text-anchor: middle; font-weight: 300; }
  .three { font-size: 7px; fill: #52707a; text-anchor: middle; }
</style>
